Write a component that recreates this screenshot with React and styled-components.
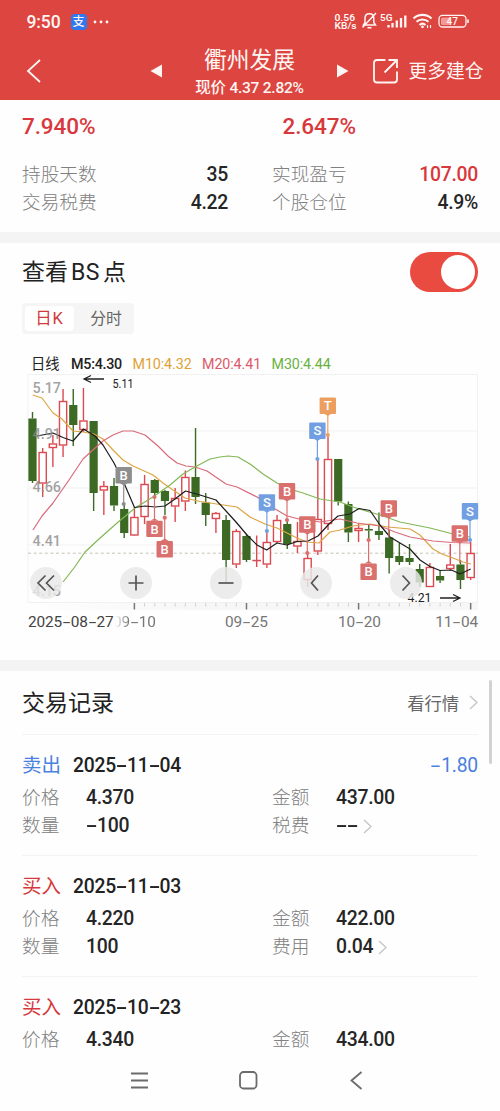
import React from "react";
import styled, { createGlobalStyle } from "styled-components";

const GlobalStyle = createGlobalStyle`
  * { box-sizing: border-box; }
  body {
    margin: 0;
    background: #fff;
    color: #222;
    font-family: Roboto, "Noto Sans CJK SC", sans-serif;
    overflow: hidden;
  }
`;

const RED = "#d8383c";
const BLUE = "#4a80de";

const Screen = styled.main`
  position: relative;
  width: 500px;
  height: 1111px;
  display: flex;
  flex-direction: column;
  background: #fefefe;
  overflow: hidden;
`;

const Header = styled.header`
  flex: none;
  height: 100px;
  background: #dd4540;
  color: #fff6f3;
`;

const StatusBar = styled.div`
  height: 42px;
  padding: 2px 31px 0 26.5px;
  display: flex;
  align-items: center;
`;

const Clock = styled.span`
  width: 44px;
  font-size: 17.5px;
  font-weight: 500;
  letter-spacing: -0.1px;
`;

const PayBadge = styled.span`
  width: 16px;
  height: 16px;
  border-radius: 4px;
  background: #2f78f0;
  font-size: 12px;
  line-height: 16px;
  font-weight: 500;
  text-align: center;
`;

const StatusIcons = styled.svg`
  display: block;
  margin-left: auto;
`;

const MoreDots = styled.svg`
  margin-left: 6px;
`;

const TitleBar = styled.div`
  height: 58px;
  padding: 0 16.5px 0 26px;
  display: flex;
  align-items: center;
`;

const BackIcon = styled.svg`
  width: 16px;
  margin-right: 108px;
`;

const TitleBlock = styled.div`
  width: 173px;
  padding: 4px 0 0 2px;
  display: flex;
  flex-direction: column;
  align-items: center;
`;

const StockName = styled.h1`
  margin: 0;
  height: 29px;
  line-height: 29px;
  font-size: 22.8px;
  font-weight: 400;
`;

const Quote = styled.div`
  height: 26px;
  line-height: 26px;
  font-size: 15.5px;
  letter-spacing: -0.25px;
  font-weight: 500;
  white-space: pre;
`;

const MoreLink = styled.div`
  margin-left: auto;
  display: flex;
  align-items: center;
  gap: 10px;
  font-size: 18.8px;
  line-height: 26px;
`;

const MoreText = styled.span`
  padding-top: 2px;
`;

const Stats = styled.section`
  flex: none;
  height: 132px;
  padding: 12px 22px 0;
`;

const StatGrid = styled.div`
  display: grid;
  grid-template-columns: 206px 206px;
  column-gap: 44px;
`;

const Rate = styled.div`
  height: 27px;
  line-height: 28px;
  margin-bottom: 22px;
  padding-left: ${(p) => p.$indent || 0}px;
  font-size: 22.5px;
  font-weight: 500;
  letter-spacing: -0.1px;
  color: ${RED};
`;

const StatRow = styled.div`
  height: 28.3px;
  display: flex;
  align-items: center;
  justify-content: space-between;
`;

const Label = styled.span`
  font-size: 18.7px;
  line-height: 28px;
  font-weight: 300;
  color: #808080;
`;

const Value = styled.span`
  font-size: 19.4px;
  font-weight: 500;
  letter-spacing: -0.3px;
  line-height: 28px;
  color: ${(p) => p.$color || "#262626"};
`;

const Gap = styled.div`
  flex: none;
  height: 10.5px;
  background: #f4f4f4;
`;

const ChartSection = styled.section`
  flex: none;
  height: 417.5px;
`;

const SectionHead = styled.div`
  height: 60px;
  padding: 0 22px;
  display: flex;
  align-items: center;
  justify-content: space-between;
`;

const SectionTitle = styled.h2`
  margin: 0;
  padding-top: ${(p) => p.$drop || 0}px;
  font-size: 23px;
  line-height: 34px;
  font-weight: 400;
`;

const Latin = styled.span`
  margin: 0 3px;
  letter-spacing: 0.5px;
`;

const Toggle = styled.div`
  width: 68px;
  height: 40px;
  margin-bottom: 1px;
  padding: 3px;
  border-radius: 20px;
  background: #e94b40;
  display: flex;
  justify-content: flex-end;
`;

const Knob = styled.span`
  width: 34px;
  height: 34px;
  border-radius: 50%;
  background: #fff;
`;

const Segmented = styled.div`
  width: 112px;
  height: 31px;
  margin-left: 22px;
  padding: 3px;
  display: flex;
  border-radius: 4px;
  background: #f5f5f5;
`;

const Segment = styled.div`
  width: ${(p) => (p.$active ? 49 : 57)}px;
  padding-left: ${(p) => (p.$active ? 0 : 7)}px;
  line-height: 25px;
  text-align: center;
  border-radius: 4px;
  font-size: ${(p) => (p.$active ? 16.5 : 15.8)}px;
  letter-spacing: ${(p) => (p.$active ? 0.8 : 0)}px;
  color: ${(p) => (p.$active ? "#d0383b" : "#666")};
  background: ${(p) => (p.$active ? "#fff" : "transparent")};
`;

const Legend = styled.div`
  height: 40.5px;
  padding: 21px 0 0 31px;
  display: flex;
  font-size: 14.3px;
  line-height: 18px;
`;

const LegendItem = styled.span`
  width: ${(p) => p.$width}px;
  color: ${(p) => p.$color || "#222"};
  font-weight: ${(p) => p.$weight || 400};
  letter-spacing: ${(p) => (p.$weight ? -0.25 : -0.1)}px;
  white-space: nowrap;
`;

const ChartArea = styled.div`
  position: relative;
  height: 236px;
`;

const ChartSvg = styled.svg`
  display: block;
  font-family: Roboto, sans-serif;
`;

const ChartControls = styled.div`
  position: absolute;
  top: 193px;
  left: 30px;
  width: 392px;
  display: flex;
  justify-content: space-between;
`;

const ControlButton = styled.button`
  width: 32px;
  height: 32px;
  padding: 0;
  border: 0;
  border-radius: 50%;
  background: rgba(232, 232, 232, 0.84);
`;

const Axis = styled.div`
  width: 450px;
  height: 32px;
  margin-left: 28px;
  display: flex;
  line-height: 24px;
  font-size: 15.4px;
  letter-spacing: -0.15px;
  color: #777;
`;

const AxisLabel = styled.span`
  width: ${(p) => p.$width}px;
  text-align: ${(p) => p.$align || "left"};
  white-space: nowrap;
  color: ${(p) => (p.$strong ? "#444" : "inherit")};
  mask-image: ${(p) => (p.$fade ? "linear-gradient(90deg, transparent 2px, #000 16px)" : "none")};
`;

const Dash = styled.span`
  display: inline-block;
  width: 0.57em;
  text-align: center;
  transform: scaleX(1.8);
`;

const Records = styled.section`
  flex: 1;
  min-height: 0;
  padding: 0 22px;
  overflow: hidden;
`;

const RecordsHead = styled.div`
  height: 64px;
  display: flex;
  align-items: center;
  justify-content: space-between;
  border-bottom: 1px solid #f4f4f4;
`;

const MarketLink = styled.span`
  display: flex;
  align-items: center;
  gap: 10px;
  font-size: 17.3px;
  color: #666;
`;

const RecordCard = styled.article`
  height: 121px;
  padding-top: 15px;
  border-bottom: 1px solid #f4f4f4;
`;

const RecordTop = styled.div`
  height: 34px;
  padding-bottom: 2px;
  display: flex;
  align-items: center;
  font-size: 19.3px;
  letter-spacing: -0.2px;
  line-height: 30px;
  font-weight: 500;
`;

const Side = styled.span`
  width: 51px;
  font-size: 19.5px;
  letter-spacing: 0;
  font-weight: 400;
  color: ${(p) => p.$color};
`;

const Profit = styled.span`
  margin-left: auto;
  font-weight: 400;
  color: ${BLUE};
`;

const RecordRow = styled.div`
  height: 28.6px;
  display: grid;
  grid-template-columns: 64px 186px 64px 1fr;
  align-items: center;
`;

const ValueLink = styled.span`
  display: flex;
  align-items: center;
  gap: 5px;
`;

const NavBar = styled.nav`
  flex: none;
  height: 58px;
  background: #fefefe;
`;

const ScrollThumb = styled.div`
  position: absolute;
  left: 488.5px;
  top: 680px;
  width: 3.5px;
  height: 84px;
  border-radius: 2px;
  background: #d2d2d2;
`;

function Num({ children }) {
  return String(children)
    .split(/(-)/)
    .map((part, i) => (part === "-" ? <Dash key={i}>-</Dash> : part));
}

function Chevron() {
  return (
    <svg width="9" height="15" viewBox="0 0 9 15" fill="none" stroke="#c4c4c4" strokeWidth="1.3">
      <path d="M1 1L8 7.5L1 14" />
    </svg>
  );
}

// [body top, body bottom, wick top, wick bottom, rising]
const CANDLES = [
  [418.5, 481, 412, 483, 0],
  [452, 483.5, 448, 497, 1],
  [443.5, 448, 435, 467, 1],
  [401, 445.5, 389, 457, 1],
  [405, 425, 389, 446, 0],
  [420.5, 430, 388, 432, 1],
  [421, 493, 421, 511, 0],
  [486, 490.5, 481, 515, 1],
  [486, 505.5, 478, 511, 0],
  [509, 533, 503, 538, 0],
  [517, 535.5, 507, 535, 1],
  [484, 517, 475, 524, 1],
  [480, 493, 479, 497, 0],
  [491, 501, 490, 515, 0],
  [498, 506.5, 488, 522, 1],
  [477, 501.5, 470.5, 511, 1],
  [477, 497, 428, 504, 0],
  [502.5, 515, 493, 526, 0],
  [513, 519, 512, 533, 1],
  [520, 560, 515, 582, 0],
  [531, 564.5, 529, 568, 1],
  [536, 560, 534, 562, 0],
  [560, 560.6, 535.5, 567, 1],
  [542, 564.5, 532, 568, 1],
  [520, 542, 515, 543, 1],
  [524, 544, 520, 549, 0],
  [541, 546.5, 522, 553, 1],
  [558, 580, 553, 587, 1],
  [519, 551.5, 459, 555, 1],
  [459, 524, 435, 530, 1],
  [459, 501.5, 459, 505.5, 0],
  [504, 532.5, 501.5, 542, 0],
  [528, 531, 523, 542, 1],
  [529, 530.5, 524, 540, 0],
  [531, 535, 512.5, 540, 0],
  [537.5, 558, 530, 573.5, 0],
  [556, 562, 543, 565, 0],
  [558, 562, 544, 565, 0],
  [569, 582.5, 564, 587, 0],
  [567, 587, 563, 587, 1],
  [576, 580.5, 570, 583, 0],
  [564.5, 569, 544, 571, 1],
  [564.5, 580, 560, 589, 0],
  [553, 578, 542, 580, 1],
];

const AVERAGES = [
  ["#dda544", "32.7,395 42,398 53,413 62,419 73,431 83,432 94,434 103,439 113,450 123,460 133,466 153,475 163,483 173,490 185,498 200,501.5 237,507 250,517 265,524 277,528 287,533 297,538 307,542 319,543 330,532 340,530 353,526 370,524 388,527 410,529 420,535 433,549 442,554 453,558 463,562 471,564"],
  ["#d96a7c", "33,530 42,516 53,503 69,480 83,459 94,449 103,441 113,435 123,431 133,431 145,435 158,446 168,456 177,463 186,466 195,467 207,471 226,484 237,487 257,497 272,507 287,516 303,520 320,522 340,519 357,523 380,526 395,532 410,537 433,541 452,542.5 470,543"],
  ["#82b856", "63,582 74,568 85,552 99,539 117,523 135,508 153,497 170,485 183,474 195,467 210,459 220,457 228,456 238,457 250,464 263,474 277,483 290,489 303,493 320,499 340,502 353,507 366,511 380,515 400,522 430,528 453,534 470,537"],
  ["#1d1d1d", "37,436 53,433 63,437.5 73,441 83.5,429 95,436 103,445 114,463 124,483 134.5,507.5 145,506 155,507 165,506 175,499 185.5,491 200,495 216,500 226,511 236,522 247,535 257,545 266.7,550 277,543 287,545 297,541.5 308,541 318,536 329,524 338,516 350,514 359,508.5 370,510.5 380,525 390,537 400,543 410,549 420,560 430,566.5 440,570.5 451.5,570 460,574 470.7,569"],
];

const PIN_COLORS = { red: "#d9706d", blue: "#729fe2", orange: "#ed9f61", gray: "#8e8e8e" };

// [x, box top, letter, colour, anchor y, dot visible]
const PINS = [
  [123.7, 467, "B", "gray", 504, 1],
  [154.5, 520.7, "B", "red", 497, 1],
  [164.7, 541, "B", "red", 517.7, 1],
  [266.9, 494.3, "S", "blue", 531, 1],
  [287, 483, "B", "red", 520, 1],
  [307.3, 516.3, "B", "red", 553, 1],
  [317.4, 422.5, "S", "blue", 459, 1],
  [327.8, 397.5, "T", "orange", 435, 1],
  [368.6, 563.5, "B", "red", 540, 1],
  [388.8, 500.3, "B", "red", 537, 0],
  [459.8, 525.3, "B", "red", 563, 0],
  [470, 503, "S", "blue", 540, 1],
];

const STEP = 10.19;
const centre = (i) => 32.5 + i * STEP;
const TICKS = Array.from({ length: 34 }, (_, i) => i + 10);
const MAJOR_TICKS = [10, 21, 32, 43];

function Candle({ x, data }) {
  const [top, bottom, high, low, rising] = data;
  const color = rising ? "#db4a50" : "#3c6a24";
  return (
    <g stroke={color} strokeWidth="1.4">
      <path d={`M${x} ${high}V${top}M${x} ${bottom}V${low}`} />
      {rising ? (
        <rect x={x - 3.6} y={top + 0.5} width="7.2" height={Math.max(bottom - top - 1, 0.1)} fill="#fff" />
      ) : (
        <rect x={x - 4.1} y={top} width="8.2" height={bottom - top} fill={color} stroke="none" />
      )}
    </g>
  );
}

function Pin({ data }) {
  const [x, top, letter, tone, anchor, dot] = data;
  const color = PIN_COLORS[tone];
  const below = anchor < top;
  const edge = below ? top : top + 16;
  const tip = below ? top - 2.5 : top + 18.5;
  return (
    <g fill={color}>
      <path d={`M${x} ${edge}V${anchor}`} stroke={color} strokeWidth="1.2" />
      {dot ? <circle cx={x} cy={anchor} r="2.1" /> : null}
      <rect x={x - 8.2} y={top} width="16.4" height="16.4" rx="1" />
      <path d={`M${x - 4} ${edge}L${x} ${tip}L${x + 4} ${edge}Z`} />
      <text x={x} y={top + 12.8} textAnchor="middle" fontSize="13" fontWeight="500" fill="#fff">
        {letter}
      </text>
    </g>
  );
}

function KLineChart() {
  return (
    <ChartSvg width="500" height="236" viewBox="0 374 500 236">
      <defs>
        <linearGradient id="axisShade" x1="0" x2="1">
          <stop offset="0" stopColor="#fefefe" />
          <stop offset="0.35" stopColor="#f7f7f7" />
          <stop offset="1" stopColor="#f7f7f7" />
        </linearGradient>
      </defs>
      <rect x="28" y="602" width="450" height="8" fill="url(#axisShade)" />
      <path d="M28 374.5H478M28 431H478M28 488H478M28 545H478M28 602.5H478M28 374V602M477.5 374V602" stroke="#f1f1f1" fill="none" />
      <path d="M28 553.2H478" stroke="#c9c2b6" strokeDasharray="3 2.6" />
      {CANDLES.map((c, i) => (
        <Candle key={i} x={centre(i)} data={c} />
      ))}
      {AVERAGES.map(([color, points]) => (
        <polyline key={color} points={points} fill="none" stroke={color} strokeWidth="1.2" strokeLinejoin="round" />
      ))}
      {PINS.map((p, i) => (
        <Pin key={i} data={p} />
      ))}
      <g fontSize="14.4" fontWeight="500" fill="#8a8a8a" fillOpacity="0.8">
        <text x="32.5" y="393">5.17</text>
        <text x="32.5" y="439">4.91</text>
        <text x="32.5" y="492">4.66</text>
        <text x="32.5" y="546">4.41</text>
        <text x="32.5" y="596">4.15</text>
      </g>
      <g fontSize="13" fill="#222">
        <text x="112.5" y="388" textLength="21" lengthAdjust="spacingAndGlyphs">5.11</text>
        <text x="407.5" y="601.5" textLength="24" lengthAdjust="spacingAndGlyphs">4.21</text>
      </g>
      <g stroke="#222" strokeWidth="1.3" fill="none">
        <path d="M104 379H84M91 375.5L84 379L91 382.5" />
        <path d="M440 598H460M453 594.5L460 598L453 601.5" />
      </g>
      {TICKS.map((i) => {
        const major = MAJOR_TICKS.includes(i);
        return (
          <path
            key={i}
            d={`M${centre(i)} 603V${major ? 609.5 : 606.5}`}
            stroke={major ? "#777" : "#d2d2d2"}
            strokeWidth={major ? 1.5 : 1}
          />
        );
      })}
    </ChartSvg>
  );
}

const CONTROLS = [
  "M15.5 8.5L8 16L15.5 23.5M24 8.5L16.5 16L24 23.5",
  "M16 8.5V23.5M8.5 16H23.5",
  "M8.5 16H23.5",
  "M18 8.5L11.5 16L18 23.5",
  "M12.5 8.5L19.5 16L12.5 23.5",
];

const TRADES = [
  { side: "卖出", color: BLUE, date: "2025-11-04", profit: "-1.80", price: "4.370", amount: "437.00", qty: "-100", feeLabel: "税费", fee: "--" },
  { side: "买入", color: RED, date: "2025-11-03", price: "4.220", amount: "422.00", qty: "100", feeLabel: "费用", fee: "0.04" },
  { side: "买入", color: RED, date: "2025-10-23", price: "4.340", amount: "434.00" },
];

function Trade({ trade }) {
  return (
    <RecordCard>
      <RecordTop>
        <Side $color={trade.color}>{trade.side}</Side>
        <span><Num>{trade.date}</Num></span>
        {trade.profit && <Profit><Num>{trade.profit}</Num></Profit>}
      </RecordTop>
      <RecordRow>
        <Label>价格</Label>
        <Value>{trade.price}</Value>
        <Label>金额</Label>
        <Value>{trade.amount}</Value>
      </RecordRow>
      {trade.qty && (
        <RecordRow>
          <Label>数量</Label>
          <Value><Num>{trade.qty}</Num></Value>
          <Label>{trade.feeLabel}</Label>
          <ValueLink>
            <Value><Num>{trade.fee}</Num></Value>
            <Chevron />
          </ValueLink>
        </RecordRow>
      )}
    </RecordCard>
  );
}

export default function App() {
  return (
    <Screen>
      <GlobalStyle />
      <Header>
        <StatusBar>
          <Clock>9:50</Clock>
          <PayBadge>支</PayBadge>
          <MoreDots width="16" height="4" fill="#fff6f3">
            <circle cx="2" cy="2" r="1.4" />
            <circle cx="8" cy="2" r="1.4" />
            <circle cx="14" cy="2" r="1.4" />
          </MoreDots>
          <StatusIcons width="135" height="20" viewBox="335 12 135 20" fill="none" stroke="#fff6f3" strokeWidth="1.5">
            <g fill="#fff6f3" stroke="none" fontWeight="600">
              <text x="335.5" y="20.5" fontSize="9.6" textLength="20.5" lengthAdjust="spacingAndGlyphs">0.56</text>
              <text x="335.5" y="29.2" fontSize="9" textLength="22" lengthAdjust="spacingAndGlyphs">KB/s</text>
              <text x="381" y="20.5" fontSize="9" textLength="12.5" lengthAdjust="spacingAndGlyphs">5G</text>
            </g>
            <path d="M364.5 25H376.5L374.8 22.5V18.5C374.8 15.5 373 13.8 370.3 13.8S366 15.8 366 18.5V22.5ZM368.5 27.8H372.5M363.5 27.5L377 13" />
            <path d="M389.5 25V27.5M393.5 23V27.5M397.8 20.5V27.5M402 18V27.5M406.3 15.5V27.5" strokeWidth="2.3" />
            <path d="M414.5 18.5C419.5 13.7 427.5 13.7 432.5 18.5M417.5 21.8C420.8 18.8 426.2 18.8 429.5 21.8M420.5 25C422.3 23.4 424.7 23.4 426.5 25" strokeWidth="2.1" />
            <path d="M428.5 25V28M431.5 25V28" strokeWidth="1.2" />
            <circle cx="423.5" cy="26.8" r="1.4" fill="#fff6f3" stroke="none" />
            <rect x="440" y="15.4" width="27" height="11.6" rx="3.5" strokeWidth="1.3" />
            <rect x="442" y="17.4" width="10" height="7.6" rx="1.5" fill="#f39a94" stroke="none" />
            <path d="M469 19.5V23" strokeWidth="1.6" />
            <text x="453.3" y="24.9" fontSize="10" fontWeight="500" textAnchor="middle" fill="#fff6f3" stroke="none">47</text>
          </StatusIcons>
        </StatusBar>
        <TitleBar>
          <BackIcon height="26" viewBox="0 0 16 26" fill="none" stroke="#fff6f3" strokeWidth="1.8">
            <path d="M14 2L2 13L14 24" />
          </BackIcon>
          <svg width="12" height="14" fill="#fff6f3"><path d="M0.5 7L12 0.5V13.5Z" /></svg>
          <TitleBlock>
            <StockName>衢州发展</StockName>
            <Quote>现价 4.37 2.82%</Quote>
          </TitleBlock>
          <svg width="14" height="14" fill="#fff6f3"><path d="M13.5 7L2 0.5V13.5Z" /></svg>
          <MoreLink>
            <svg width="25" height="26" viewBox="0 0 25 26" fill="none" stroke="#fff6f3" strokeWidth="1.8">
              <path d="M12.5 2H4Q1 2 1 5V21.5Q1 24.5 4 24.5H21Q24 24.5 24 21.5V13.5M15.5 2H24V10M24 2L11.5 14.5" />
            </svg>
            <MoreText>更多建仓</MoreText>
          </MoreLink>
        </TitleBar>
      </Header>

      <Stats>
        <StatGrid>
          <Rate>7.940%</Rate>
          <Rate $indent={10.5}>2.647%</Rate>
          <StatRow><Label>持股天数</Label><Value>35</Value></StatRow>
          <StatRow><Label>实现盈亏</Label><Value $color={RED}>107.00</Value></StatRow>
          <StatRow><Label>交易税费</Label><Value>4.22</Value></StatRow>
          <StatRow><Label>个股仓位</Label><Value>4.9%</Value></StatRow>
        </StatGrid>
      </Stats>
      <Gap />

      <ChartSection>
        <SectionHead>
          <SectionTitle $drop={1}>查看<Latin>BS</Latin>点</SectionTitle>
          <Toggle><Knob /></Toggle>
        </SectionHead>
        <Segmented>
          <Segment $active>日K</Segment>
          <Segment>分时</Segment>
        </Segmented>
        <Legend>
          <LegendItem $width={40}>日线</LegendItem>
          <LegendItem $width={61.5} $weight={500}>M5:4.30</LegendItem>
          <LegendItem $width={69.5} $color="#dfa236">M10:4.32</LegendItem>
          <LegendItem $width={69.5} $color="#dc5a68">M20:4.41</LegendItem>
          <LegendItem $width={70} $color="#69b23f">M30:4.44</LegendItem>
        </Legend>
        <ChartArea>
          <KLineChart />
          <ChartControls>
            {CONTROLS.map((d) => (
              <ControlButton key={d}>
                <svg width="32" height="32" fill="none" stroke="#555" strokeWidth="1.7"><path d={d} /></svg>
              </ControlButton>
            ))}
          </ChartControls>
        </ChartArea>
        <Axis>
          <AxisLabel $width={85} $strong><Num>2025-08-27</Num></AxisLabel>
          <AxisLabel $width={112} $fade><Num>09-10</Num></AxisLabel>
          <AxisLabel $width={113}><Num>09-25</Num></AxisLabel>
          <AxisLabel $width={70}><Num>10-20</Num></AxisLabel>
          <AxisLabel $width={70} $align="right"><Num>11-04</Num></AxisLabel>
        </Axis>
      </ChartSection>
      <Gap />

      <Records>
        <RecordsHead>
          <SectionTitle $drop={3}>交易记录</SectionTitle>
          <MarketLink>看行情 <Chevron /></MarketLink>
        </RecordsHead>
        {TRADES.map((t) => (
          <Trade key={t.date} trade={t} />
        ))}
      </Records>

      <NavBar>
        <svg width="500" height="58" viewBox="0 1053 500 58" fill="none" stroke="#6b6b6b" strokeWidth="1.8">
          <path d="M131 1073.5H148M131 1080.5H148M131 1087.5H148" />
          <rect x="240" y="1072" width="16.5" height="16.5" rx="3.5" />
          <path d="M361.5 1072L351.5 1080.5L361.5 1089" />
        </svg>
      </NavBar>
      <ScrollThumb />
    </Screen>
  );
}
